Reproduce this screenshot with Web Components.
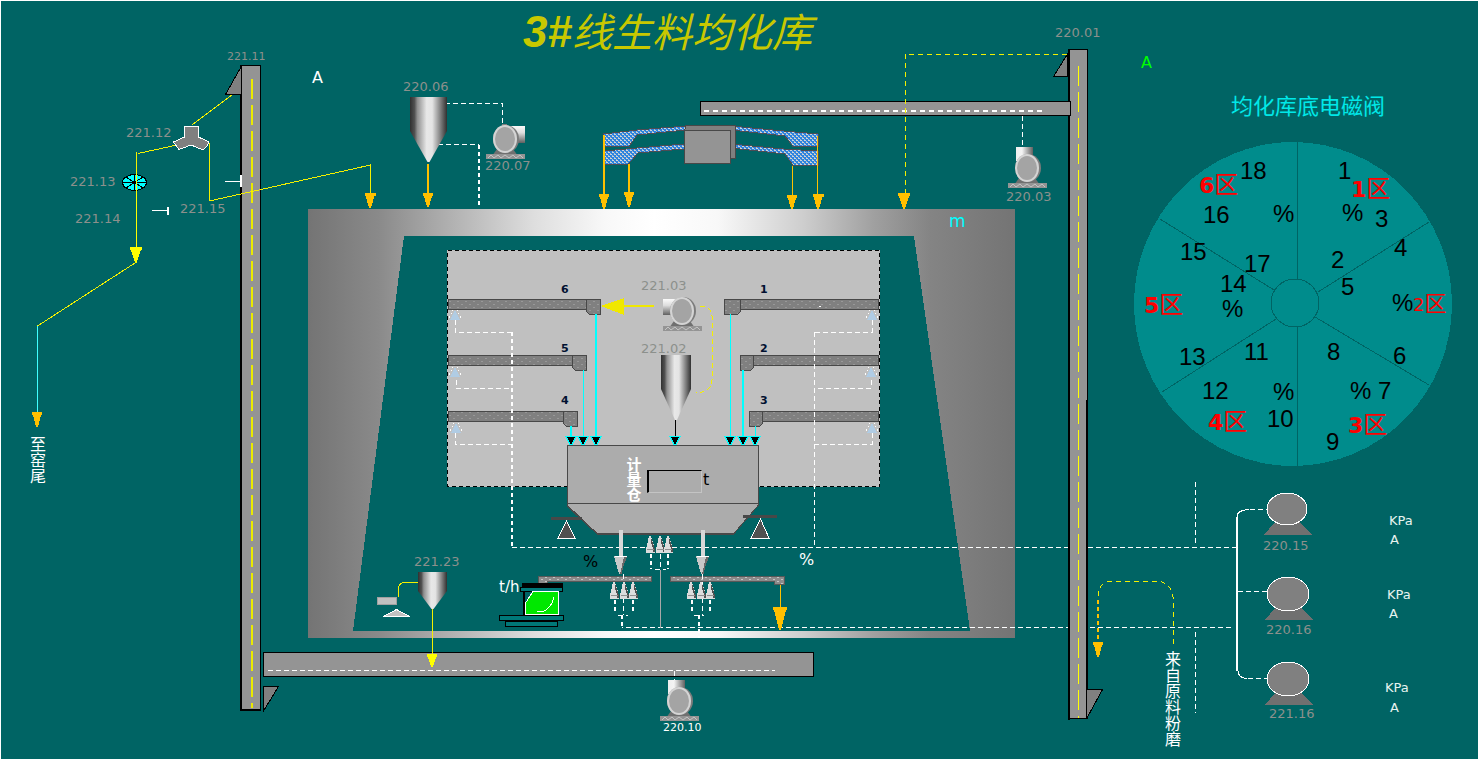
<!DOCTYPE html>
<html lang="zh-CN">
<head>
<meta charset="utf-8">
<title>3#线生料均化库</title>
<meta name="viewport" content="width=device-width, initial-scale=1">
<style>
  html, body { margin: 0; background: #fff; }
  body { font-family: "DejaVu Sans", "Noto Sans CJK SC", sans-serif; }
</style>
</head>
<body>
<mimic-stage>
  <silo-structure></silo-structure>
  <utility-lines></utility-lines>
  <weighing-section></weighing-section>
  <conveying-line></conveying-line>
  <aeration-blowers></aeration-blowers>
  <valve-dial></valve-dial>
  <tag-labels></tag-labels>
</mimic-stage>

<script>
/* The stage stacks all layers in one grid cell; every layer shares one coordinate space. */
customElements.define('mimic-stage', class extends HTMLElement {
  constructor() {
    super();
    this.attachShadow({ mode: 'open' }).innerHTML = `
      <style>
        :host { display: block; background: #fff; }
        main { display: grid; grid-template-columns: minmax(0, 1fr); }
        ::slotted(*) { grid-area: 1 / 1; }
      </style>
      <main><slot></slot></main>`;
  }
});

class MimicLayer extends HTMLElement {
  constructor() {
    super();
    this.attachShadow({ mode: 'open' }).innerHTML = `
      <style>
        :host { display: block; pointer-events: none; }
        svg { display: block; width: 100%; height: auto; }
        .px { shape-rendering: crispEdges; }
        .wd { fill: none; stroke: #fff; stroke-width: 1; stroke-dasharray: 5 3; }
        .w2 { fill: none; stroke: #fff; stroke-width: 2; stroke-dasharray: 4 3; }
        .yl { fill: none; stroke: #f4f000; stroke-width: 1; }
        .steel { fill: #949494; stroke: #000; }
        ${this.css || ''}
      </style>
      <svg viewBox="0 0 1480 760" xmlns="http://www.w3.org/2000/svg">${this.draw()}</svg>`;
  }
}

/* Shared equipment symbols */
const gradients = `
  <linearGradient id="cyl"><stop offset="0" stop-color="#303030"/><stop offset=".12" stop-color="#505050"/><stop offset=".2" stop-color="#909090"/><stop offset=".45" stop-color="#e8e8e8"/><stop offset=".6" stop-color="#e4e4e4"/><stop offset=".85" stop-color="#747474"/><stop offset="1" stop-color="#303030"/></linearGradient>
  <linearGradient id="ductV"><stop offset="0" stop-color="#eee"/><stop offset=".35" stop-color="#f4f4f4"/><stop offset="1" stop-color="#606060"/></linearGradient>
  <linearGradient id="ductH" x2="0" y2="1"><stop offset="0" stop-color="#fafafa"/><stop offset=".4" stop-color="#ddd"/><stop offset="1" stop-color="#606060"/></linearGradient>
  <pattern id="speckle" width="8" height="6" patternUnits="userSpaceOnUse"><rect width="8" height="6" fill="#808080"/><rect x="1" y="1" width="2" height="1" fill="#989898"/><rect x="5" y="4" width="2" height="1" fill="#989898"/></pattern>
  <pattern id="speckle2" width="8" height="4" patternUnits="userSpaceOnUse"><rect width="8" height="4" fill="#8c8c8c"/><rect x="1" y="1" width="2" height="1" fill="#c4c4c4"/><rect x="5" y="3" width="2" height="1" fill="#c4c4c4"/></pattern>`;

const hopper = (x, y, w, h, cone) => `
  <path d="M${x} ${y}h${w}v${h}l${-w / 2 + 1} ${cone}h-2l${-w / 2 + 1} ${-cone}z" fill="url(#cyl)"/>`;

const blower = (cx, cy, duct) => {
  const d = {
    right: `<rect x="${cx + 5}" y="${cy - 13}" width="15" height="17" fill="url(#ductH)"/><rect x="${cx - 3}" y="${cy - 15}" width="5" height="4" fill="#808080"/>`,
    left: `<rect x="${cx - 19}" y="${cy - 12}" width="14" height="16" fill="url(#ductH)"/>`,
    top: `<rect x="${cx - 11}" y="${cy - 21}" width="17" height="14" fill="url(#ductV)"/>`
  }[duct];
  return `${d}
    <path d="M${cx - 8} ${cy + 10}h16l5 7h-26z" fill="#707070"/>
    <rect x="${cx - 19}" y="${cy + 15}" width="39" height="5" fill="#949494"/>
    <path d="M${cx - 17} ${cy + 19}l3-3l3 3l4-3l3 3l4-3l4 3l4-3l3 3l4-3l3 3" fill="none" stroke="#c4c4c4"/>
    <ellipse cx="${cx + 1}" cy="${cy}" rx="13" ry="14" fill="#7c7c7c"/>
    <ellipse cx="${cx}" cy="${cy}" rx="12" ry="14" fill="#d4d4d4"/>
    <ellipse cx="${cx}" cy="${cy}" rx="10" ry="12" fill="#a4a4a4"/>`;
};

const downHead = (x, y, w, h, fill = '#ffc000') =>
  `<path d="M${x - w / 2} ${y}h${w}v3h-1l${-w / 2 + 2} ${h - 3}h-2l${-w / 2 + 2} ${3 - h}h-1z" fill="${fill}"/>`;

customElements.define('silo-structure', class extends MimicLayer {
  draw() {
    return `<defs><linearGradient id="wall">
        <stop offset="0" stop-color="#747474"/><stop offset=".1" stop-color="#8a8a8a"/><stop offset=".2" stop-color="#b0b0b0"/>
        <stop offset=".32" stop-color="#dedede"/><stop offset=".42" stop-color="#f8f8f8"/><stop offset=".49" stop-color="#fff"/>
        <stop offset=".58" stop-color="#f8f8f8"/><stop offset=".7" stop-color="#cecece"/><stop offset=".8" stop-color="#a0a0a0"/>
        <stop offset=".88" stop-color="#848484"/><stop offset="1" stop-color="#747474"/></linearGradient></defs>
    <g class="px">
      <rect x="1" y="1" width="1477" height="758" fill="#006464"/>
      <path d="M308 209H1015V638H308zM404 236L353 631H970L914 236z" fill="url(#wall)" fill-rule="evenodd"/>
      <rect x="447" y="250" width="433" height="237" fill="#c0c0c0"/>
      <rect x="447.5" y="250.5" width="432" height="236" fill="none" stroke="#000" stroke-dasharray="4 3"/>
    </g>`;
  }
});

/* Compressed air lines */
customElements.define('utility-lines', class extends MimicLayer {
  draw() {
    return `<g class="px">
      <path class="wd" d="M1237 547H512M1231 627H622M1195 482V543M1195 632V713M1022 116V147"/>
      <path class="wd" d="M445 103H502V127M438 144H479"/><path class="w2" d="M479 145V207"/>
    </g>`;
  }
});

/* Aerated chutes, weighing bin, feeders and belt scale inside the silo */
customElements.define('weighing-section', class extends MimicLayer {
  get css() {
    return `.pipe { fill: url(#speckle); stroke: #484848; }
      .feeder { fill: url(#speckle2); stroke: #585858; }
      .cy { stroke: #0ff; fill: none; }
      input { box-sizing: border-box; display: block; width: 100%; height: 100%; margin: 0; padding: 0; background: #acacac;
              border: 1px solid #c4c4c4; border-top-color: #000; border-left: 2px solid #000; border-radius: 0; font: 14px "DejaVu Sans", sans-serif; text-align: right; }`;
  }
  draw() {
    const leftChute = (y, x) => `<path class="pipe" d="M448 ${y + .5}H${x}v10H448z"/><path class="pipe" d="M${x - .5} ${y + .5}h14v15h-11l-3-3z"/>`;
    const rightChute = (y, x, w) => `<path class="pipe" d="M${x + w} ${y + .5}H878.5v10H${x + w}z"/><path class="pipe" d="M${x + .5} ${y + .5}h${w}v12l-3 3h-${w - 3}z"/>`;
    const cone = (x, y) => `<path d="M${x - 1} ${y}h2l3 10l1 3v4h-9v-4l1-3z" fill="#dcdcdc"/><path d="M${x + 1} ${y + 1}l3 9l1 3v3h-2v-4l-2-5z" fill="#505050"/><path d="M${x - 3} ${y + 13.5}h7" stroke="#909090"/>`;
    const cyHead = x => `<path d="M${x - 5} 436.5h10l-4 8h-2z" fill="#000" stroke="#0ff"/>`;
    const air = (x, y) => `<path d="M${x} ${y}l5 10h-10z" fill="#b0cce4"/><path d="M${x - 6} ${y + 8}l4-8M${x + 6} ${y + 8}l-4-8" fill="none" stroke="#fff" stroke-dasharray="2 2"/>`;
    const bigHead = (x, y) => `<path d="M${x - 7} ${y}h13l-4 11l-1 7h-3l-2-7z" fill="#c8c8c8"/><path d="M${x + 3} ${y + 1}h3l-4 10l-1 7h-2z" fill="#686868"/><path d="M${x - 6} ${y + .5}h12" stroke="#fff"/>`;
    return `<defs>${gradients}</defs><g class="px">
      ${leftChute(299, 587)}${leftChute(355, 573)}${leftChute(411, 564)}
      ${rightChute(299, 724, 16)}${rightChute(355, 740, 13)}${rightChute(411, 749, 13)}
      <path class="wd" d="M455 320V332H512M456 380V388H512M455 433V444H512M872 320V332H814M871 380V388H814M872 433V444H814M814 332V547"/>
      <path class="w2" d="M512 332V547"/>
      ${air(455, 310)}${air(455, 367)}${air(456, 423)}${air(872, 310)}${air(871, 367)}${air(872, 423)}
      <path class="cy" stroke-width="2" d="M596 314V437M571 426V437M743 370V437"/>
      <path class="cy" d="M583.5 370V437M730.5 314V437M755.5 426V437"/>
      <path d="M675.5 419V437" stroke="#000"/>
      <path class="yl" d="M700 306q12 1 12 10V380q0 12 -16 13" stroke-dasharray="5 3"/>
      <path d="M654 306H622" stroke="#f0e800" stroke-width="2"/><path d="M601 306L624 298V315z" fill="#f0e800"/>
      <rect x="819" y="306" width="2" height="1" fill="#fff"/>

      <path d="M567 445.5H758.5V505L734 533.5H597L567 505z" fill="#acacac" stroke="#484848"/>
      <path d="M567 445V506L597 534H734M567 503.5H758" fill="none" stroke="#484848"/>
      <path d="M551 518H582M743 516H777" stroke="#484848" stroke-width="3"/>
      <path d="M566.5 521L575 538H558zM760.5 519L769 538H751z" fill="#505050" stroke="#fff"/>
      ${[571, 583, 596, 675, 730, 743, 755].map(cyHead).join('')}

      <path class="feeder" d="M538.5 576.5H651V581.5H547V583.5H538.5zM670.5 576.5H784.5V584.5H774V581.5H670.5z"/>
      <path d="M621 530V557M703 530V557" stroke="#d8d8d8" stroke-width="4"/>
      ${bigHead(621, 556)}${bigHead(703, 556)}
      <path class="w2" d="M651 554V569M668 554V569M615 600V614M633 600V614M692 600V614M710 600V614M622 615V628M699 615V638"/>
      <path class="wd" d="M660 554V570M655 569H666M623 574V615M702 574V615M618 615H628M694 615H704" stroke-dasharray="4 3"/>
      <path d="M660.5 570V628" stroke="#a8a8a8"/>
      ${[[650, 536], [660, 536], [668, 536], [614, 582], [624, 582], [633, 582], [691, 582], [701, 582], [710, 582]].map(p => cone(...p)).join('')}
      <path d="M780.5 585V610" stroke="#ffc000"/>${downHead(780, 607, 14, 23)}

      <rect x="522" y="583" width="41" height="5" fill="#000"/>
      <path d="M520.5 587.5H562.5V591.5H520.5zM499.5 615.5H563V620.5H499.5zM505 621.5H557V626.5H505z" fill="#007878" stroke="#000"/>
      <path d="M523.5 591V615" stroke="#000" stroke-width="2"/>
      <path d="M533 591.5H558.5V614.5H525.5V603z" fill="#00e800" stroke="#fff"/>
      <path d="M537 611.5h6q8-3 11-14" fill="none" stroke="#fff"/>
    </g>
    ${hopper(661, 355, 30, 34, 31)}${blower(682, 311, 'left')}
    <foreignObject x="647" y="470" width="55" height="23"><input type="text" readonly aria-label="计量仓 t"></foreignObject>`;
  }
});

/* Elevators, conveyors, distributors and material flow arrows */
customElements.define('conveying-line', class extends MimicLayer {
  draw() {
    return `<defs>${gradients}
      <pattern id="air" width="4" height="4" patternUnits="userSpaceOnUse"><rect width="4" height="4" fill="#2c84e0"/><path d="M0 0h2v1h-2zM2 2h2v1h-2z" fill="#d0d4d8"/><path d="M2 1h1v1h-1zM0 3h1v1h-1z" fill="#a8b8c8"/></pattern></defs>
    <g class="px">
      <path class="steel" d="M241.5 65.5H260.5V709.5H241.5zM1069.5 49.5H1087.5V718.5H1069.5z"/>
      <path d="M241 65V711M240 710H261M1069 49V720M1087 400V719" stroke="#000" stroke-width="2"/>
      <path d="M241.5 66V94.5H225.5zM263.5 686.5H278.5L263.5 711zM1067.5 54V76.5H1053.5zM1086.5 689.5H1102.5L1087 718z" fill="#808080" stroke="#000"/>
      <path d="M252 79V708" stroke="#eaea00" stroke-width="2" stroke-dasharray="20 6"/>
      <path d="M1078.5 66V718" stroke="#ff0" stroke-dasharray="20 6"/>
      <path class="steel" d="M700.5 101.5H1070.5V115.5H700.5zM263.5 652.5H813.5V676.5H263.5z"/>
      <path d="M704 111H1046" stroke="#fff" stroke-width="2" stroke-dasharray="5 4"/>
      <path class="wd" d="M268 670H775M674 671V680"/>

      <path class="yl" d="M232 95L192 125M177 145L138 153.5M136.5 152V262L37.5 326M209.5 143V201L370.5 165V195M432.5 609V665"/>
      <path d="M37.5 326V413" stroke="#40ffff" fill="none"/>
      ${downHead(136, 247, 12, 15, '#ff0')}${downHead(432, 654, 10, 13, '#ff0')}
      <path class="yl" d="M1067 54H905V195" stroke-dasharray="5 4"/>
      <path class="yl" d="M1173 644V597Q1171 583 1158 581H1110Q1098 583 1098 597" stroke-dasharray="5 4"/>
      <path d="M1098 600V643" stroke="#ffc000" stroke-width="2" stroke-dasharray="4 3"/>
      ${downHead(37, 412, 10, 15)}${downHead(370, 193, 11, 15)}${downHead(428, 193, 10, 14)}${downHead(1098, 642, 10, 15)}${downHead(904, 193, 12, 16)}

      <path d="M225 181.5H241M152 210.5H168" stroke="#fff"/><path d="M241 175V187M168 207V215" stroke="#fff" stroke-width="2"/>
      <path d="M184.5 126.5H198.5V137L209 142L207 146L203 150L191 145L179 149.5L173.5 142L184.5 137z" fill="#808080" stroke="#fff"/>
      <ellipse cx="134.5" cy="182.5" rx="12" ry="8" fill="#0ff" stroke="#000"/>
      <path d="M122 182.5H147M134.5 175V190M126 177L143 188M143 177L126 188" stroke="#000"/><path d="M136.5 170V247" stroke="#ff0"/>

      <g fill="url(#air)" stroke="#4c4c54">
        <path d="M686 126L637 130L603.5 134V146.5H629L637 135L686 130zM684 144L637 148L604 151V164.5H628L638 153L684 149z"/>
        <path d="M731 126L784 131L818 134V146.5H793L785 136L731 130zM731 144L784 149L818 151V165.5H793L785 154L731 148z"/>
      </g>
      <path d="M684.5 130.5L686 125.5H735V158H730.5V130.5z" fill="#808080" stroke="#484848"/>
      <path d="M684.5 130.5H730.5V163.5H684.5z" fill="#949494" stroke="#484848"/>
      <path d="M604 135V197M629 164V197M428 164V195" stroke="#ffc000" stroke-width="2"/>
      <path d="M792.5 166V200M817.5 136V200" stroke="#ffc000"/>
      ${downHead(604, 194, 10, 15)}${downHead(629, 192, 10, 15)}${downHead(792, 195, 10, 14)}${downHead(818, 194, 11, 15)}

      <rect x="377.5" y="597.5" width="19" height="7" fill="#c0c0c0" stroke="#a0a0a0"/>
      <path d="M383.5 616.5L396.5 609.5L409.5 616.5z" fill="#c0c0c0" stroke="#fff"/>
      <path class="yl" d="M398 597V589Q399 582 406 582.5H418"/>
    </g>
    ${hopper(410, 97, 37, 34, 31)}${hopper(418, 572, 29, 19, 18)}
    ${blower(505, 139, 'right')}${blower(1027, 168, 'top')}${blower(679, 701, 'top')}`;
  }
});

customElements.define('aeration-blowers', class extends MimicLayer {
  draw() {
    const fan = (x, y, rx, ry) => `<path d="M${x - 12} ${y + 13}h24l13 13h-48z" fill="#707070"/><ellipse cx="${x}" cy="${y}" rx="${rx}" ry="${ry}" fill="#808080" stroke="#fff"/>`;
    return `<g class="px">
      <path d="M1237 517V671" stroke="#fff" stroke-width="2"/>
      <path d="M1237 517Q1237 510 1249 509.5M1238 671Q1238 678 1247 678.5" fill="none" stroke="#fff"/>
      <path class="wd" d="M1250 509.5H1267M1238 591.5H1267M1248 678.5H1267"/>
      ${fan(1287, 509, 20, 16)}${fan(1288, 594, 21, 17)}${fan(1288, 679, 21, 17)}
    </g>`;
  }
});

/* Bottom solenoid valve dial: six sectors, eighteen valves */
customElements.define('valve-dial', class extends MimicLayer {
  get css() {
    return `.n { font: 24px "Liberation Sans", sans-serif; fill: #000; }
      .z { font: bold 22px "DejaVu Sans", sans-serif; fill: #f00; }
      .z tspan { font: 24px "Noto Sans CJK SC", sans-serif; }
      .cap { font: 22px "Noto Sans CJK SC", sans-serif; fill: #00e8e8; }
      .z.s { font-weight: normal; font-size: 18px; } .z.s tspan { font-size: 22px; }`;
  }
  draw() {
    const numbers = [['18', 1240, 179], ['1', 1338, 179], ['3', 1375, 227], ['%', 1342, 221], ['2', 1331, 268], ['5', 1341, 295],
      ['4', 1394, 256], ['%', 1392, 311], ['6', 1393, 364], ['8', 1327, 360], ['7', 1378, 399], ['%', 1350, 399], ['9', 1326, 450],
      ['10', 1267, 427], ['%', 1273, 400], ['12', 1202, 399], ['11', 1244, 360], ['13', 1179, 365], ['14', 1220, 292],
      ['%', 1222, 317], ['17', 1244, 272], ['15', 1180, 260], ['16', 1203, 223], ['%', 1273, 222]];
    const zones = [['6', 1199, 193], ['1', 1351, 197], ['3', 1348, 433], ['4', 1208, 430], ['5', 1144, 313]];
    return `<g class="px">
      <ellipse cx="1293" cy="304" rx="159" ry="162" fill="#008c8c"/>
      <g fill="none" stroke="#006464"><ellipse cx="1295" cy="303" rx="24" ry="24"/>
      <path d="M1297.5 142V279M1297.5 327V466M1160 219L1274 290M1429 222L1318 292M1162 392L1276 319M1429 385L1315 317"/></g></g>
      <text class="cap" x="1231" y="114">均化库底电磁阀</text>
      ${numbers.map(([t, x, y]) => `<text class="n" x="${x}" y="${y}">${t}</text>`).join('')}
      ${zones.map(([t, x, y]) => `<text class="z" x="${x}" y="${y}">${t}<tspan>区</tspan></text>`).join('')}
      <text class="z s" x="1413" y="311">2<tspan>区</tspan></text>`;
  }
});

customElements.define('tag-labels', class extends MimicLayer {
  get css() {
    return `text { font: 13px "DejaVu Sans", sans-serif; fill: #8c908c; }
      .sm { font-size: 11px; } .white { fill: #fff; } .black { fill: #000; }
      .b { font-weight: bold; font-size: 11px; fill: #001030; }
      .a { font-size: 16px; }
      .unit { font-size: 15px; }
      .u { font-size: 13px; fill: #e8f4f0; }
      .v { font: 16px "Noto Sans CJK SC", sans-serif; writing-mode: vertical-rl; fill: #fff; }
      .v.bin { font-size: 15px; font-weight: bold; }
      .title { font: italic bold 44px "Liberation Sans", sans-serif; fill: #c8c800; }
      .title tspan { font: italic 40px "Noto Sans CJK SC", sans-serif; }
      .green { fill: #0f0; } .cyan { fill: #0ff; font-size: 17px; }`;
  }
  draw() {
    const labels = [
      ['221.11', 227, 60, 'sm'], ['221.12', 126, 137], ['221.13', 70, 186], ['221.14', 75, 223], ['221.15', 180, 213],
      ['220.06', 403, 91], ['220.07', 485, 170], ['220.03', 1006, 201], ['220.01', 1055, 37], ['221.03', 641, 290],
      ['221.02', 641, 353], ['221.23', 414, 566], ['220.10', 663, 731, 'sm white'], ['220.15', 1263, 550],
      ['220.16', 1266, 634], ['221.16', 1269, 718],
      ['6', 561, 293, 'b'], ['5', 561, 352, 'b'], ['4', 561, 404, 'b'], ['1', 760, 293, 'b'], ['2', 760, 352, 'b'], ['3', 760, 404, 'b'],
      ['A', 312, 83, 'a white'], ['A', 1141, 68, 'a green'], ['m', 949, 227, 'cyan'], ['t', 703, 485, 'a black'],
      ['%', 583, 567, 'a black'], ['%', 799, 565, 'a white'], ['t/h', 499, 592, 'unit white'],
      ['KPa', 1389, 525, 'u'], ['A', 1390, 544, 'u'], ['KPa', 1387, 599, 'u'], ['A', 1389, 618, 'u'], ['KPa', 1385, 692, 'u'], ['A', 1390, 712, 'u'],
      ['至窑尾', 38, 436, 'v'], ['来自原料粉磨', 1173, 651, 'v'], ['计量仓', 634, 457, 'v bin']
    ];
    return `<text class="title" role="heading" aria-level="1" x="523" y="47">3#<tspan>线生料均化库</tspan></text>` +
      labels.map(([t, x, y, c = '']) => `<text class="${c}" x="${x}" y="${y}">${t}</text>`).join('');
  }
});
</script>
</body>
</html>
